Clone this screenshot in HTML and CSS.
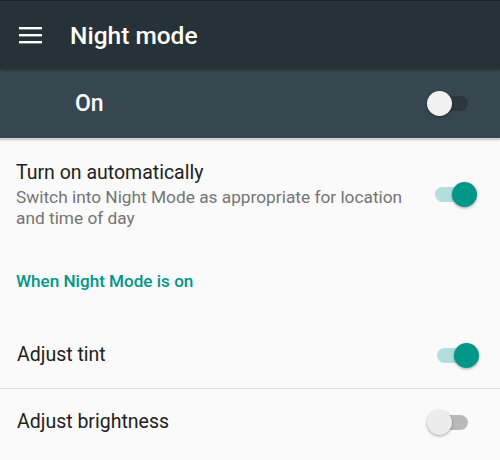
FILE: index.html
```html
<!DOCTYPE html>
<html lang="en">
<head>
    <meta charset="UTF-8">
    <meta name="viewport" content="width=device-width, initial-scale=1.0">
    <title>Night mode</title>
    <link rel="stylesheet" href="styles.css">
</head>
<body>
    <div class="toolbar">
        <svg class="menu" width="24" height="18" viewBox="0 0 24 18">
            <rect x="0" y="1" width="23" height="2.4" fill="#fff"/>
            <rect x="0" y="8" width="23" height="2.4" fill="#fff"/>
            <rect x="0" y="15" width="23" height="2.4" fill="#fff"/>
        </svg>
        <h1>Night mode</h1>
    </div>

    <div class="master">
        <span class="master-label">On</span>
        <div class="switch dark"><div class="track"></div><div class="thumb"></div></div>
    </div>

    <div class="list">
        <div class="row auto">
            <div class="text">
                <div class="title">Turn on automatically</div>
                <div class="summary">Switch into Night Mode as appropriate for location and time of day</div>
            </div>
            <div class="switch on"><div class="track"></div><div class="thumb"></div></div>
        </div>

        <div class="category">When Night Mode is on</div>

        <div class="row single">
            <div class="title">Adjust tint</div>
            <div class="switch on tint"><div class="track"></div><div class="thumb"></div></div>
        </div>
        <div class="divider"></div>
        <div class="row single">
            <div class="title">Adjust brightness</div>
            <div class="switch"><div class="track"></div><div class="thumb"></div></div>
        </div>
    </div>
</body>
</html>
```

FILE: styles.css
```css
body {
    margin: 0;
    background: #fafafa;
    font-family: Roboto, "Noto Sans", sans-serif;
    overflow: hidden;
}

.toolbar {
    position: relative;
    z-index: 2;
    height: 68px;
    border-top: 1px solid #1b2327;
    background: #263238;
    display: flex;
    align-items: center;
    box-shadow: 0 1px 3px rgba(0, 0, 0, 0.35);
}

.menu {
    margin-left: 19px;
    margin-right: 27px;
}

.toolbar h1 {
    margin: 0;
    color: #fff;
    font-size: 24.5px;
    font-weight: 500;
}

.master {
    position: relative;
    z-index: 1;
    height: 69px;
    background: #37474f;
    display: flex;
    align-items: center;
    justify-content: space-between;
    padding: 0 23px 0 75px;
    box-shadow: 0 1px 2px rgba(0, 0, 0, 0.25);
    border-bottom: 1px solid #d2d4d5;
}

.master-label {
    color: #fff;
    font-size: 23px;
    font-weight: 500;
}

.row {
    display: flex;
    align-items: center;
    justify-content: space-between;
    padding: 0 23px 0 16px;
}

.row.auto {
    padding-top: 21px;
    padding-bottom: 20px;
}

.row.single {
    height: 66px;
    padding-left: 17px;
}

.title {
    font-size: 19.5px;
    line-height: 26px;
    color: #212121;
}

.summary {
    margin-top: 1px;
    font-size: 17.3px;
    line-height: 21px;
    color: #757575;
    max-width: 406px;
}

.category {
    padding: 20px 16px 0;
    height: 53px;
    font-size: 17.1px;
    line-height: 24px;
    font-weight: 500;
    color: #009688;
}

.divider {
    height: 1px;
    background: #dcdcdc;
}

/* switch */
.switch {
    position: relative;
    width: 50px;
    height: 25px;
    flex-shrink: 0;
}

.switch .track {
    position: absolute;
    left: 8px;
    top: 5px;
    width: 33px;
    height: 15px;
    border-radius: 8px;
    background: #b9b9b9;
}

.switch .thumb {
    position: absolute;
    left: 0;
    top: 0;
    width: 25px;
    height: 25px;
    border-radius: 50%;
    background: #ececec;
    box-shadow: 0 1px 3px rgba(0, 0, 0, 0.35);
}

.switch.on .track {
    background: #b2dfdb;
}

.switch.on .thumb {
    left: 25px;
    background: #009688;
}

.switch.tint {
    margin-right: -2px;
}

.switch.dark .track {
    background: #2b393f;
}

.switch.dark .thumb {
    background: #f1f1f1;
}
```
